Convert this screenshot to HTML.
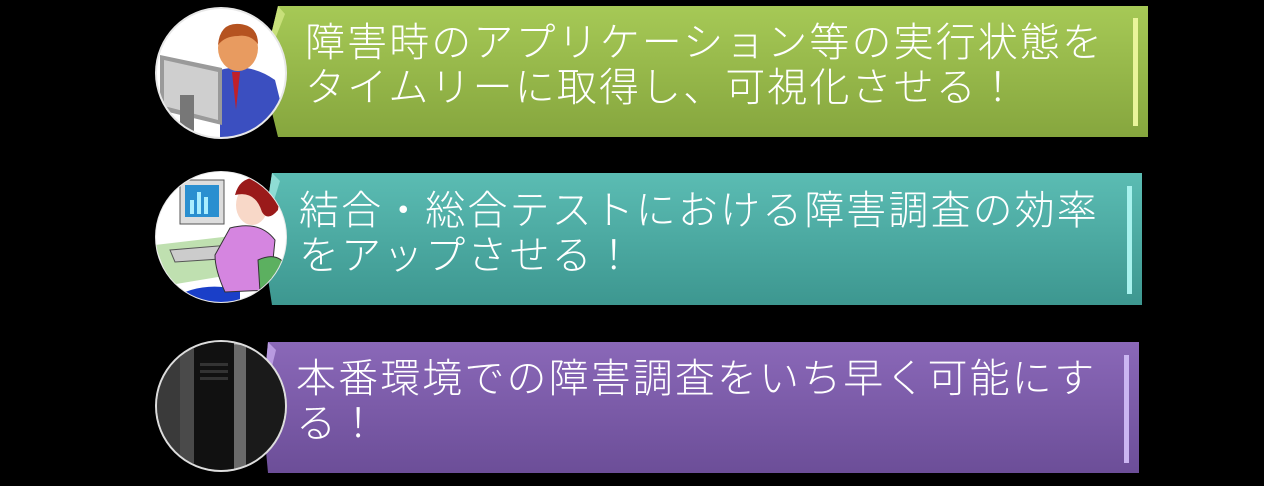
<!DOCTYPE html>
<html><head><meta charset="utf-8"><style>
html,body{margin:0;padding:0;background:#000;width:1264px;height:486px;overflow:hidden}
.t{position:absolute;color:#fff;font-family:"Liberation Sans","Noto Sans CJK JP",sans-serif;font-size:40px;line-height:45px;white-space:nowrap;letter-spacing:2.1px;font-weight:300}
</style></head><body>
<svg width="1264" height="486" style="position:absolute;left:0;top:0">
<defs>
<linearGradient id="g1" x1="0" y1="0" x2="0" y2="1"><stop offset="0" stop-color="#a6c956"/><stop offset="1" stop-color="#86a63e"/></linearGradient>
<linearGradient id="g2" x1="0" y1="0" x2="0" y2="1"><stop offset="0" stop-color="#5bbcb3"/><stop offset="1" stop-color="#3d9790"/></linearGradient>
<linearGradient id="g3" x1="0" y1="0" x2="0" y2="1"><stop offset="0" stop-color="#8a68b8"/><stop offset="1" stop-color="#6c4e98"/></linearGradient>
<clipPath id="c1"><circle cx="221" cy="73" r="64"/></clipPath>
<clipPath id="c2"><circle cx="221" cy="237" r="65"/></clipPath>
<clipPath id="c3"><circle cx="221" cy="406" r="64"/></clipPath>
</defs>
<polygon points="278,6 1148,6 1148,137 278,137 262,72" fill="url(#g1)"/>
<polygon points="262,72 278,6 285,14" fill="#c8e07a"/>
<rect x="1133" y="18" width="5" height="108" fill="#eaf59a"/>
<polygon points="272,173 1142,173 1142,305 272,305 262,239" fill="url(#g2)"/>
<polygon points="262,239 272,173 280,181" fill="#8edcd4"/>
<rect x="1127" y="186" width="5" height="108" fill="#a8f2ee"/>
<polygon points="268,342 1139,342 1139,473 268,473 262,407" fill="url(#g3)"/>
<polygon points="262,407 268,342 276,350" fill="#b89ae0"/>
<rect x="1124" y="355" width="5" height="108" fill="#cbb6f2"/>
<circle cx="221" cy="73" r="66" fill="#e8e8e8"/>
<g clip-path="url(#c1)">
<rect x="150" y="0" width="150" height="150" fill="#fff"/>
<path d="M220,70 Q250,62 275,80 L290,140 L220,140Z" fill="#3b4fc0"/>
<path d="M232,72 L240,72 L236,110Z" fill="#c0202a"/>
<ellipse cx="238" cy="48" rx="20" ry="23" fill="#e89b60"/>
<path d="M218,45 Q220,22 240,24 Q258,26 258,44 Q250,34 238,36 Q225,36 218,45Z" fill="#b55320"/>
<path d="M160,55 L222,68 L222,125 L160,110Z" fill="#9a9a9a"/>
<path d="M164,60 L218,72 L218,120 L164,106Z" fill="#cfcfcf"/>
<rect x="180" y="95" width="14" height="40" fill="#777"/>
</g>
<circle cx="221" cy="237" r="66" fill="#e8e8e8"/>
<g clip-path="url(#c2)">
<rect x="150" y="170" width="150" height="140" fill="#fff"/>
<path d="M155,245 L240,235 L260,270 L170,285Z" fill="#bfe0b0"/>
<rect x="180" y="180" width="44" height="44" fill="#ddd" stroke="#555"/>
<rect x="185" y="185" width="34" height="32" fill="#2a8fd0"/>
<rect x="190" y="200" width="4" height="14" fill="#aef"/><rect x="197" y="192" width="4" height="22" fill="#aef"/><rect x="204" y="197" width="4" height="17" fill="#aef"/>
<path d="M170,250 L230,245 L235,258 L175,262Z" fill="#ccc" stroke="#555"/>
<path d="M170,300 Q200,280 240,290 L240,320 L160,320Z" fill="#1a3fc8"/>
<path d="M230,228 Q260,220 275,240 L270,290 L225,292 Q215,270 215,255Z" fill="#d585e0" stroke="#333"/>
<ellipse cx="252" cy="205" rx="16" ry="20" fill="#f8d8c8"/>
<path d="M235,195 Q240,175 262,178 Q282,185 278,210 Q268,222 262,212 Q255,190 235,195Z" fill="#9a1a1a"/>
<path d="M258,260 Q280,250 288,270 L280,295 L260,292Z" fill="#5cb060" stroke="#333"/>
</g>
<circle cx="221" cy="406" r="66" fill="#ddd"/>
<g clip-path="url(#c3)">
<rect x="150" y="340" width="150" height="140" fill="#8a8a8a"/>
<rect x="150" y="340" width="30" height="140" fill="#3a3a3a"/>
<rect x="192" y="342" width="42" height="136" fill="#111"/>
<rect x="180" y="345" width="14" height="130" fill="#4a4a4a"/>
<rect x="234" y="345" width="12" height="130" fill="#6a6a6a"/>
<rect x="246" y="345" width="40" height="130" fill="#1a1a1a"/>
<rect x="200" y="363" width="28" height="3" fill="#333"/><rect x="200" y="370" width="28" height="3" fill="#333"/><rect x="200" y="377" width="28" height="3" fill="#333"/>
</g>
</svg>
<div class="t" style="left:305px;top:21px">障害時のアプリケーション等の実行状態を<br>タイムリーに取得し、可視化させる！</div>
<div class="t" style="left:299px;top:189px">結合・総合テストにおける障害調査の効率<br>をアップさせる！</div>
<div class="t" style="left:296px;top:357px">本番環境での障害調査をいち早く可能にす<br>る！</div>
</body></html>
